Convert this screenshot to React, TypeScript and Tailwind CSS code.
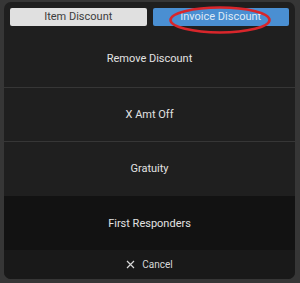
const FONT = "font-['Roboto','Liberation_Sans',sans-serif]";

const ROWS = ['Remove Discount', 'X Amt Off', 'Gratuity'];

export default function App() {
  return (
    <div className={`h-[283px] w-[300px] bg-[#363636] pl-[4px] pt-[2px] ${FONT}`}>
      <div className="flex h-[277px] w-[291px] flex-col overflow-hidden rounded-[7px] bg-[#1f1f1f]">
        {/* tabs */}
        <div className="relative flex h-[26px] shrink-0 gap-[6px] px-[6px] pt-[6px]">
          <button className="flex h-[18px] flex-1 items-center justify-center rounded-[2px] bg-[#e0e0e0] text-[11px] text-[#3c3c3c]">
            Item Discount
          </button>
          <button className="flex h-[18px] flex-1 items-center justify-center rounded-[2px] bg-[#4a8fd2] text-[11px] text-[#dfeaf6]">
            Invoice Discount
          </button>
          <svg className="absolute left-[164px] top-[3px]" width="104" height="30" viewBox="0 0 104 30">
            <ellipse cx="52" cy="15" rx="49.5" ry="12.5" fill="none" stroke="#d8262b" strokeWidth="2.6" />
          </svg>
        </div>

        {ROWS.map((label, i) => (
          <div
            key={label}
            className={`flex shrink-0 items-center justify-center border-[#363636] text-[11px] text-[#e2e2e2] ${
              i === 0 ? 'h-[60px] border-b pt-[3px]' : 'h-[54px] pt-[1px]'
            } ${i === 1 ? 'border-b' : ''}`}
          >
            {label}
          </div>
        ))}

        <div className="flex h-[54px] shrink-0 items-center justify-center bg-[#121212] pt-[3px] text-[11px] text-[#e2e2e2]">
          First Responders
        </div>

        <div className="flex flex-1 items-center justify-center gap-[7px] bg-[#191919] text-[10px] text-[#d8d8d8]">
          <svg width="9" height="9" viewBox="0 0 9 9">
            <path d="M1 1 L8 8 M8 1 L1 8" stroke="#d8d8d8" strokeWidth="1.2" />
          </svg>
          Cancel
        </div>
      </div>
    </div>
  );
}
